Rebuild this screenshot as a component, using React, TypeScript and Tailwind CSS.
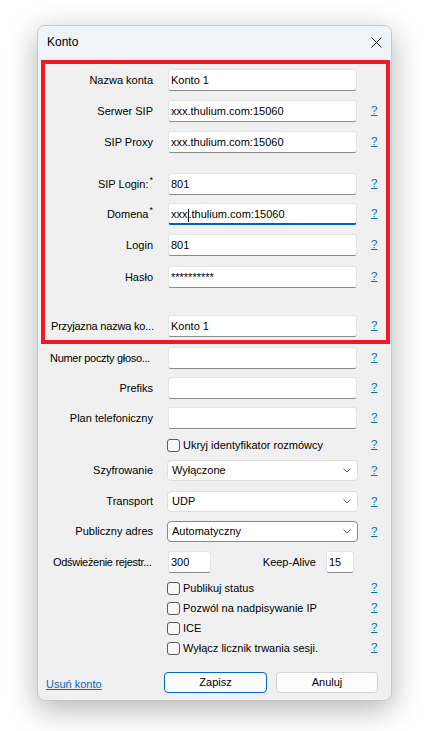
import React from "react";

const font = { fontFamily: '"Liberation Sans", Arial, sans-serif' };

function Help() {
  return (
    <a href="#" className="ml-[14px] text-[11.5px] leading-none text-[#0066cc] underline">
      ?
    </a>
  );
}

function TextBox({ value, focused, width = "w-[189px]" }: { value?: string; focused?: boolean; width?: string }) {
  return (
    <div
      className={`relative h-[22px] ${width} shrink-0 rounded-[3px] border border-[#e4e4e4] bg-white px-[2px] pt-[3px] text-[11px] leading-[14px] text-black ${
        focused ? "border-b-2 border-b-[#005fb8]" : "border-b-[#8b8b8b]"
      }`}
    >
      {value}
    </div>
  );
}

function Row({ label, children, help = true }: { label: React.ReactNode; children: React.ReactNode; help?: boolean }) {
  return (
    <div className="flex h-[22px] items-center">
      <div className="w-[108px] shrink-0 whitespace-nowrap text-right text-[11px] text-black">{label}</div>
      <div className="ml-[15px] flex">{children}</div>
      {help && <Help />}
    </div>
  );
}

function Select({ value, dark }: { value: string; dark?: boolean }) {
  return (
    <div className="ml-[14px] flex items-center">
      <div
        className={`flex h-[21px] w-[191px] items-center justify-between rounded-[4px] border bg-white pl-[4px] pr-[6px] text-[11px] text-black ${
          dark ? "border-[#8a8a8a]" : "border-[#dedede]"
        }`}
      >
        <span>{value}</span>
        <svg width="8" height="5" viewBox="0 0 8 5" fill="none">
          <path d="M0.5 0.5L4 4L7.5 0.5" stroke="#5c5c5c" strokeWidth="1" />
        </svg>
      </div>
      <span className="ml-[13px] text-[11.5px] leading-none text-[#0066cc] underline">?</span>
    </div>
  );
}

function SelectRow({ label, value, dark }: { label: string; value: string; dark?: boolean }) {
  return (
    <div className="flex h-[21px] items-center">
      <div className="w-[108px] shrink-0 whitespace-nowrap text-right text-[11px] text-black">{label}</div>
      <Select value={value} dark={dark} />
    </div>
  );
}

function Check({ label, className = "h-[20px]" }: { label: string; className?: string }) {
  return (
    <div className={`flex items-center ${className}`}>
      <div className="w-[108px] shrink-0" />
      <div className="ml-[14px] flex w-[190px] items-center">
        <div className="h-[13px] w-[13px] rounded-[3px] border border-[#5b5b5b] bg-[#f7f7f7]" />
        <span className="ml-[3px] whitespace-nowrap text-[11px] text-black">{label}</span>
      </div>
      <span className="ml-[14px] text-[11.5px] leading-none text-[#0066cc] underline">?</span>
    </div>
  );
}

const Star = () => <sup className="ml-[1px] text-[9px]">*</sup>;

export default function App() {
  return (
    <div className="min-h-screen bg-white pl-[37px] pt-[25px]" style={font}>
      <div className="flex h-[676px] w-[355px] flex-col overflow-hidden rounded-[8px] border border-[#c9c9c9] bg-[#f0f0f0] shadow-[0_8px_30px_rgba(0,0,0,0.3)]">
        {/* title bar */}
        <div className="flex h-[32px] shrink-0 items-center justify-between bg-[#eff4f9] pl-[9px] pr-[9px]">
          <span className="text-[12px] text-black">Konto</span>
          <svg width="11" height="11" viewBox="0 0 11 11">
            <path d="M0.5 0.5L10.5 10.5M10.5 0.5L0.5 10.5" stroke="#1b1b1b" strokeWidth="1" />
          </svg>
        </div>

        {/* highlighted block */}
        <div className="ml-[3px] mr-[1px] mt-[2px] border-4 border-[#ed1c24] pb-[3px] pt-[5px]">
          <Row label="Nazwa konta" help={false}>
            <TextBox value="Konto 1" />
          </Row>
          <div className="mt-[9px]">
            <Row label="Serwer SIP">
              <TextBox value="xxx.thulium.com:15060" />
            </Row>
          </div>
          <div className="mt-[9px]">
            <Row label="SIP Proxy">
              <TextBox value="xxx.thulium.com:15060" />
            </Row>
          </div>
          <div className="mt-[20px]">
            <Row
              label={
                <>
                  SIP Login:<Star />
                </>
              }
            >
              <TextBox value="801" />
            </Row>
          </div>
          <div className="mt-[8px]">
            <Row
              label={
                <>
                  Domena<Star />
                </>
              }
            >
              <div className="relative h-[22px] w-[189px] rounded-[3px] border border-[#e4e4e4] border-b-2 border-b-[#005fb8] bg-white px-[2px] pt-[3px] text-[11px] leading-[14px] text-black">
                xxx<span className="inline-block h-[13px] w-px translate-y-[2px] bg-black align-top" />.thulium.com:15060
              </div>
            </Row>
          </div>
          <div className="mt-[9px]">
            <Row label="Login">
              <TextBox value="801" />
            </Row>
          </div>
          <div className="mt-[10px]">
            <Row label="Hasło">
              <TextBox value="**********" />
            </Row>
          </div>
          <div className="mt-[27px]">
            <div className="flex h-[22px] items-center">
              <div className="ml-[6px] w-[102px] shrink-0 whitespace-nowrap text-left text-[11px] tracking-[-0.2px] text-black">
                Przyjazna nazwa ko...
              </div>
              <div className="ml-[15px] flex">
                <TextBox value="Konto 1" />
              </div>
              <Help />
            </div>
          </div>
        </div>

        {/* remaining settings */}
        <div className="pl-[7px]">
          <div className="mt-[3px] flex h-[22px] items-center">
            <div className="ml-[5px] w-[103px] shrink-0 whitespace-nowrap text-[11px] tracking-[-0.3px] text-black">
              Numer poczty głoso...
            </div>
            <div className="ml-[15px] flex">
              <TextBox />
            </div>
            <Help />
          </div>
          <div className="mt-[8px]">
            <Row label="Prefiks">
              <TextBox />
            </Row>
          </div>
          <div className="mt-[8px]">
            <Row label="Plan telefoniczny">
              <TextBox />
            </Row>
          </div>
          <div className="mt-[5px]">
            <Check label="Ukryj identyfikator rozmówcy" className="h-[22px]" />
          </div>
          <div className="mt-[4px]">
            <SelectRow label="Szyfrowanie" value="Wyłączone" />
          </div>
          <div className="mt-[10px]">
            <SelectRow label="Transport" value="UDP" />
          </div>
          <div className="mt-[9px]">
            <SelectRow label="Publiczny adres" value="Automatyczny" dark />
          </div>
          <div className="mt-[9px] flex h-[22px] items-center">
            <div className="ml-[8px] w-[100px] shrink-0 whitespace-nowrap text-[11px] tracking-[-0.3px] text-black">
              Odświeżenie rejestr...
            </div>
            <div className="ml-[15px] flex">
              <TextBox value="300" width="w-[43px]" />
            </div>
            <div className="w-[105px] whitespace-nowrap text-right text-[11px] text-black">Keep-Alive</div>
            <div className="ml-[10px] flex">
              <TextBox value="15" width="w-[28px]" />
            </div>
          </div>
          <div className="mt-[5px]">
            <Check label="Publikuj status" />
            <Check label="Pozwól na nadpisywanie IP" />
            <Check label="ICE" />
            <Check label="Wyłącz licznik trwania sesji." />
          </div>
          <div className="mt-[14px] flex h-[21px] items-center">
            <div className="w-[119px] shrink-0 pl-[1px]">
              <a href="#" className="text-[11px] text-[#0066cc] underline">
                Usuń konto
              </a>
            </div>
            <button className="h-[21px] w-[103px] rounded-[4px] border-[1.5px] border-[#0067c0] bg-[#fdfdfd] text-[11px] text-black">
              Zapisz
            </button>
            <button className="ml-[9px] h-[21px] w-[102px] rounded-[4px] border border-[#d3d3d3] bg-[#fdfdfd] text-[11px] text-black">
              Anuluj
            </button>
          </div>
        </div>
      </div>
    </div>
  );
}
